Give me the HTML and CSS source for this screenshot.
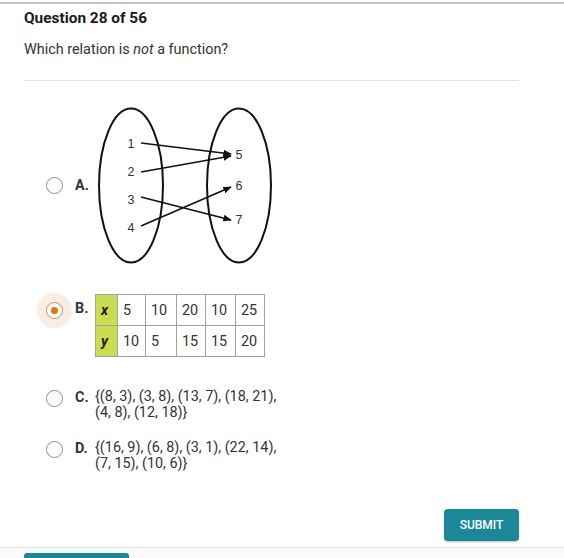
FILE: index.html
```html
<!DOCTYPE html>
<html>
<head>
<meta charset="utf-8">
<link rel="stylesheet" href="styles.css">
</head>
<body>
<div class="topbar"></div>
<main class="content">
  <h1 class="title">Question 28 of 56</h1>
  <p class="prompt">Which relation is <em>not</em> a function?</p>
  <hr class="divider">
  <div class="options">
    <div class="option option-a">
      <span class="radio"></span>
      <span class="letter">A.</span>
      <svg class="diagram" width="176" height="158" viewBox="97 105 176 158">
        <defs>
          <marker id="ah" viewBox="0 0 10 10" refX="9" refY="5" markerWidth="5" markerHeight="5" orient="auto">
            <path d="M0,1 L10,5 L0,9 Z" fill="#111"/>
          </marker>
        </defs>
        <ellipse cx="131" cy="184.5" rx="32" ry="77" fill="none" stroke="#111" stroke-width="2"/>
        <ellipse cx="239" cy="184.5" rx="32" ry="77" fill="none" stroke="#111" stroke-width="2"/>
        <g font-family="Liberation Sans, Arial, sans-serif" font-size="12.5" fill="#333" text-anchor="middle">
          <text x="131" y="147">1</text>
          <text x="131" y="175">2</text>
          <text x="131" y="203">3</text>
          <text x="131" y="231">4</text>
          <text x="239" y="158">5</text>
          <text x="239" y="189">6</text>
          <text x="239" y="223">7</text>
        </g>
        <g stroke="#111" stroke-width="1.7" marker-end="url(#ah)">
          <line x1="141" y1="142" x2="231" y2="153"/>
          <line x1="141" y1="171" x2="231" y2="155"/>
          <line x1="141" y1="196" x2="231" y2="219"/>
          <line x1="141" y1="225" x2="231" y2="186"/>
        </g>
      </svg>
    </div>
    <div class="option option-b">
      <span class="radio selected"><span class="dot"></span></span>
      <span class="letter">B.</span>
      <table class="xy">
        <tr><th>x</th><td>5</td><td>10</td><td>20</td><td>10</td><td>25</td></tr>
        <tr><th>y</th><td>10</td><td>5</td><td>15</td><td>15</td><td>20</td></tr>
      </table>
    </div>
    <div class="option option-c">
      <span class="radio"></span>
      <span class="letter">C.</span>
      <span class="text">{(8, 3), (3, 8), (13, 7), (18, 21),<br>(4, 8), (12, 18)}</span>
    </div>
    <div class="option option-d">
      <span class="radio"></span>
      <span class="letter">D.</span>
      <span class="text">{(16, 9), (6, 8), (3, 1), (22, 14),<br>(7, 15), (10, 6)}</span>
    </div>
  </div>
  <div class="actions">
    <button class="submit">SUBMIT</button>
  </div>
</main>
<footer class="footer">
  <span class="next-btn"></span>
</footer>
</body>
</html>
```
FILE: styles.css
```css
html, body {
  margin: 0;
  padding: 0;
  background: #fff;
  font-family: Roboto, "Liberation Sans", Arial, sans-serif;
  color: #222;
  overflow: hidden;
  height: 558px;
}
.topbar {
  height: 2px;
  border-bottom: 2px solid #c4c4c4;
}
.content {
  padding: 0 45px 0 24px;
  width: 495px;
}
.title {
  margin: 5px 0 0;
  font-size: 15.4px;
  line-height: 18px;
  font-weight: 700;
  color: #1a1a1a;
}
.prompt {
  margin: 14px 0 0;
  font-size: 14.4px;
  line-height: 18px;
  color: #333;
}
.prompt em { font-style: italic; }
.divider {
  margin: 21px 0 0;
  border: 0;
  border-top: 1px solid #e2e2e2;
  height: 0;
}
.options {
  display: flex;
  flex-direction: column;
}
.option {
  display: flex;
  align-items: center;
}
.radio {
  flex: none;
  width: 17px;
  height: 17px;
  border: 1px solid #8a8a8a;
  border-radius: 50%;
  margin-left: 22px;
  box-sizing: border-box;
  position: relative;
  background: #fff;
}
.radio.selected {
  border: 1.5px solid #e08a2c;
  box-shadow: 0 0 0 9px #f9eee3;
  background: #fff;
}
.radio .dot {
  position: absolute;
  left: 50%;
  top: 50%;
  width: 7px;
  height: 7px;
  margin: -3.5px 0 0 -3.5px;
  border-radius: 50%;
  background: #e07a14;
}
.letter {
  flex: none;
  width: 20px;
  margin-left: 12px;
  font-weight: 700;
  font-size: 14.4px;
  color: #333;
}
.option-a {
  margin-top: 25px;
}
.option-a .diagram {
  display: block;
  margin-left: 2px;
}
.option-b {
  margin-top: 30px;
  align-items: flex-start;
}
.option-b .radio { margin-top: 8px; }
.option-b .letter { margin-top: 6px; }
.xy {
  border-collapse: collapse;
  font-size: 14.4px;
  color: #333;
}
.xy th, .xy td {
  border: 1px solid #a0a0a0;
  height: 30px;
  padding: 0 0 0 5px;
  text-align: left;
  font-weight: 400;
}
.xy th {
  background: #c9dc52;
  font-style: italic;
  font-weight: 700;
  width: 16px;
  padding-left: 5px;
  color: #222;
}
.xy td:nth-child(2) { width: 22px; }
.xy td:nth-child(3) { width: 25px; }
.xy td:nth-child(4) { width: 23px; }
.xy td:nth-child(5) { width: 24px; }
.xy td:nth-child(6) { width: 23px; }
.option-c {
  margin-top: 32px;
  align-items: flex-start;
}
.option-d {
  margin-top: 19px;
  align-items: flex-start;
}
.option-c .radio, .option-d .radio { margin-top: 1px; }
.text {
  font-size: 14.4px;
  line-height: 16px;
  color: #333;
}
.actions {
  display: flex;
  justify-content: flex-end;
  margin-top: 37px;
}
.submit {
  width: 75px;
  height: 32px;
  border: 0;
  border-radius: 4px;
  background: #1b8799;
  color: #fff;
  font-family: Roboto, "Liberation Sans", Arial, sans-serif;
  font-size: 12px;
  font-weight: 500;
  box-shadow: 0 1px 2px rgba(0,0,0,0.25);
  padding: 0;
}
.footer {
  margin-top: 6px;
  border-top: 1px solid #e4e4e4;
  background: #fafafa;
  height: 20px;
  padding: 5px 0 0 24px;
}
.next-btn {
  display: block;
  width: 105px;
  height: 20px;
  background: #1b8799;
  border-radius: 3px;
}
```
